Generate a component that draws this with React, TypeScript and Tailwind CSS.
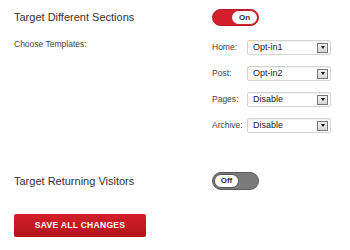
function Toggle({ on }: { on: boolean }) {
  return (
    <div
      className={
        on
          ? "flex h-[17px] w-[47px] items-center justify-end rounded-full border border-[#b51823] bg-[#d11f2c] p-[1px]"
          : "flex h-[18px] w-[47px] items-center justify-start rounded-full border border-[#5a5a5a] bg-[#7a7a7a] p-[1px]"
      }
    >
      <div
        className={
          on
            ? "flex h-full w-[25px] items-center justify-center rounded-full bg-white text-[8px] font-bold text-[#333]"
            : "flex h-full w-[25px] items-center justify-center rounded-full border border-[#555] bg-white text-[8px] font-bold text-[#333]"
        }
      >
        {on ? "On" : "Off"}
      </div>
    </div>
  )
}

function SelectRow({ label, value }: { label: string; value: string }) {
  return (
    <div className="flex items-center">
      <span className="w-[35px] text-[8.5px] text-[#444]">{label}</span>
      <div className="flex h-[15px] w-[84px] items-center justify-between rounded-[2px] border border-[#d4d4d4] bg-white pl-[5px] pr-[2px] shadow-[inset_0_1px_1px_rgba(0,0,0,0.06)]">
        <span className="text-[9px] text-[#222]">{value}</span>
        <div className="flex h-[10px] w-[11px] items-center justify-center border border-[#777] bg-gradient-to-b from-[#f2f2f2] to-[#d6d6d6]">
          <div className="h-0 w-0 border-x-[2.5px] border-t-[3px] border-x-transparent border-t-[#111]" />
        </div>
      </div>
    </div>
  )
}

export default function App() {
  return (
    <div className="h-[250px] w-[350px] bg-white pl-[14px] pt-[9px] font-['Liberation_Sans',Arial,sans-serif]">
      <div className="flex items-center">
        <div className="w-[198px] text-[11px] text-[#333]">Target Different Sections</div>
        <Toggle on />
      </div>

      <div className="mt-[11px] flex">
        <div className="w-[198px] pt-[1px] text-[8.5px] text-[#444]">Choose Templates:</div>
        <div className="mt-[3px] flex flex-col gap-[11px]">
          <SelectRow label="Home:" value="Opt-in1" />
          <SelectRow label="Post:" value="Opt-in2" />
          <SelectRow label="Pages:" value="Disable" />
          <SelectRow label="Archive:" value="Disable" />
        </div>
      </div>

      <div className="mt-[39px] flex items-center">
        <div className="w-[198px] text-[11px] text-[#333]">Target Returning Visitors</div>
        <Toggle on={false} />
      </div>

      <button className="mt-[24px] flex h-[23px] w-[132px] items-center justify-center rounded-[2px] bg-gradient-to-b from-[#d41f2a] to-[#b3141c] text-[8.5px] font-bold tracking-[0.3px] text-white">
        SAVE ALL CHANGES
      </button>
    </div>
  )
}
